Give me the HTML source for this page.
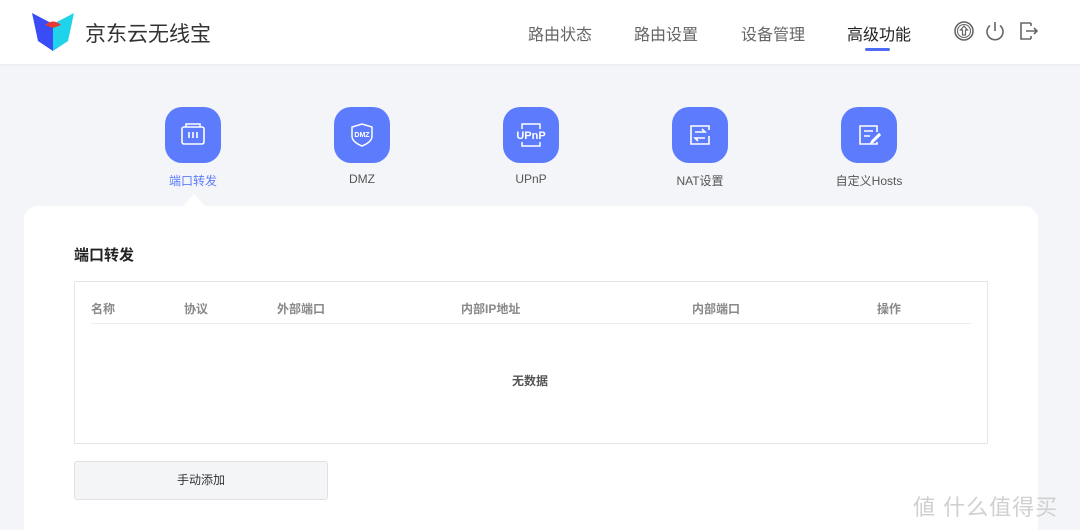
<!DOCTYPE html>
<html><head><meta charset="utf-8"><style>
*{margin:0;padding:0;box-sizing:border-box}
html,body{width:1080px;height:530px;overflow:hidden}
body{background:#f4f5f9;font-family:"Liberation Sans","Noto Sans CJK SC",sans-serif;position:relative;color:#333}
.hdr{position:absolute;left:0;top:0;width:1080px;height:64px;background:#fff;box-shadow:0 1px 3px rgba(0,0,0,.05)}
.abs{position:absolute}
.nav{font-size:16px;color:#666;top:21px}
.ic{position:absolute;top:107px;width:56px;height:56px;border-radius:17px;background:#5d7bfd}
.lb{position:absolute;top:172px;font-size:12px;color:#555;text-align:center;width:120px}
.card{position:absolute;left:24px;top:206px;width:1014px;height:324px;background:#fff;border-radius:14px 14px 0 0}
.th{position:absolute;top:300px;font-size:12px;color:#888;font-weight:bold}
</style></head><body>
<div class="hdr">
<svg class="abs" style="left:30px;top:13px" width="46" height="38" viewBox="0 0 46 38">
<path d="M2 0 L23 11 L23 38 L8 28 Z" fill="#3a4cf5"/>
<path d="M44 0 L23 11 L23 38 L38 28 Z" fill="#1ed3ea"/>
<path d="M15 12 Q23 5 31 12 L23 15 Z" fill="#e53b34"/>
</svg>
<div class="abs" style="left:85px;top:18px;font-size:21px;color:#333">京东云无线宝</div>
<div class="abs nav" style="left:528px">路由状态</div>
<div class="abs nav" style="left:634px">路由设置</div>
<div class="abs nav" style="left:741px">设备管理</div>
<div class="abs nav" style="left:847px;color:#222">高级功能</div>
<div class="abs" style="left:865px;top:48px;width:25px;height:3px;background:#4c6cf7;border-radius:2px"></div>
<svg class="abs" style="left:953px;top:20px" width="90" height="22" viewBox="0 0 90 22" fill="none" stroke="#666" stroke-width="1.6">
<circle cx="11" cy="11" r="9"/><circle cx="11" cy="11" r="6.5" stroke-width="1.1"/>
<path d="M11 6 L7.5 10 H9.5 V15 H12.5 V10 H14.5 Z" stroke-width="1.2"/>
<path d="M37 5.5 A8 8 0 1 0 47 5.5"/><path d="M42 2 V11"/>
<path d="M78 3 H68 V19 H78"/><path d="M73 11 H84 M81 8 L84 11 L81 14"/><path d="M78 3 V6 M78 16 V19"/>
</svg>
</div>

<div class="ic" style="left:165px"><svg width="56" height="56" fill="none" stroke="#fff" stroke-width="1.6"><rect x="17" y="20" width="22" height="17" rx="2"/><path d="M21 20 V17 H35 V20"/><path d="M24 25 V31 M28 25 V31 M32 25 V31"/></svg></div>
<div class="ic" style="left:334px"><svg width="56" height="56" fill="none" stroke="#fff" stroke-width="1.5"><path d="M28 17 L38 20 V29 C38 34 33 37 28 39 C23 37 18 34 18 29 V20 Z"/><text x="28" y="30" font-size="7" fill="#fff" stroke="none" text-anchor="middle" font-family="Liberation Sans" font-weight="bold">DMZ</text></svg></div>
<div class="ic" style="left:503px"><svg width="56" height="56" fill="none" stroke="#fff" stroke-width="1.5"><path d="M19 22 V17 H37 V22 M19 35 V39 H37 V35"/><text x="28" y="32" font-size="11" fill="#fff" stroke="none" text-anchor="middle" font-family="Liberation Sans" font-weight="bold">UPnP</text></svg></div>
<div class="ic" style="left:672px"><svg width="56" height="56" fill="none" stroke="#fff" stroke-width="1.6"><path d="M37 29 V37 H19 V19 H37 V23"/><path d="M23 25 H33 L30 22 M33 31 H23 L26 34"/></svg></div>
<div class="ic" style="left:841px"><svg width="56" height="56" fill="none" stroke="#fff" stroke-width="1.6"><path d="M36 25 V19 H19 V37 H36 V35"/><path d="M23 24 H32 M23 29 H29"/><path d="M38 27 L31 34 L30 36 L32 35 L39 28 Z"/></svg></div>
<div class="lb" style="left:133px;color:#5d7bfd">端口转发</div>
<div class="lb" style="left:302px">DMZ</div>
<div class="lb" style="left:471px">UPnP</div>
<div class="lb" style="left:640px">NAT设置</div>
<div class="lb" style="left:809px">自定义Hosts</div>
<div class="abs" style="left:183px;top:194px;width:0;height:0;border-left:11px solid transparent;border-right:11px solid transparent;border-bottom:12px solid #fff"></div>

<div class="card"></div>
<div class="abs" style="left:74px;top:244px;font-size:15px;font-weight:bold;color:#222">端口转发</div>
<div class="abs" style="left:74px;top:281px;width:914px;height:163px;border:1px solid #e6e6e6"></div>
<div class="th" style="left:91px">名称</div>
<div class="th" style="left:184px">协议</div>
<div class="th" style="left:277px">外部端口</div>
<div class="th" style="left:461px">内部IP地址</div>
<div class="th" style="left:692px">内部端口</div>
<div class="th" style="left:877px">操作</div>
<div class="abs" style="left:91px;top:323px;width:880px;height:1px;background:#eee"></div>
<div class="abs" style="left:512px;top:372px;font-size:12px;color:#555;font-weight:bold">无数据</div>
<div class="abs" style="left:74px;top:461px;width:254px;height:39px;background:#f4f5f7;border:1px solid #dfe1e5;border-radius:3px;font-size:12px;color:#333;text-align:center;line-height:37px">手动添加</div>
<div class="abs" style="left:913px;top:490px;font-size:22px;color:#d0d0d0;letter-spacing:1px">値 什么值得买</div>
</body></html>
